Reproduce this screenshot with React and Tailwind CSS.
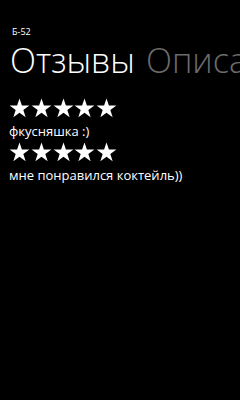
const Star = () => (
    <svg width="21" height="20" viewBox="0 0 24 23" className="block shrink-0">
        <path d="M12 0.5l2.75 8.2h8.65l-7 5.1 2.7 8.3L12 17l-7.1 5.1 2.7-8.3-7-5.1h8.65z" fill="#fff" />
    </svg>
);

const Stars = () => (
    <div className="flex gap-[0.8px]">
        {[1, 2, 3, 4, 5].map((i) => (
            <Star key={i} />
        ))}
    </div>
);

const reviews = [
    { id: 1, text: 'фкусняшка :)' },
    { id: 2, text: 'мне понравился коктейль))' },
];

export default function App() {
    return (
        <div className="w-[240px] h-[400px] bg-black text-white overflow-hidden font-['Open_Sans','Noto_Sans',sans-serif]">
            <div className="pl-[12px] pt-[26px] text-[9px] leading-[12px]">Б-52</div>
            {/* pivot header, next item runs off the edge */}
            <div className="flex whitespace-nowrap pl-[10px] mt-[2px] text-[34px] leading-[40px] font-light">
                <span>Отзывы</span>
                <span className="ml-[11px] text-[#6b6b6b]">Описание</span>
            </div>

            {/* reviews list */}
            <div className="pl-[9px] mt-[18px] flex flex-col">
                {reviews.map((r) => (
                    <div key={r.id} className="flex flex-col">
                        <Stars />
                        <p className="text-[13px] leading-[22px] mt-[2px]">{r.text}</p>
                    </div>
                ))}
            </div>
        </div>
    );
}
